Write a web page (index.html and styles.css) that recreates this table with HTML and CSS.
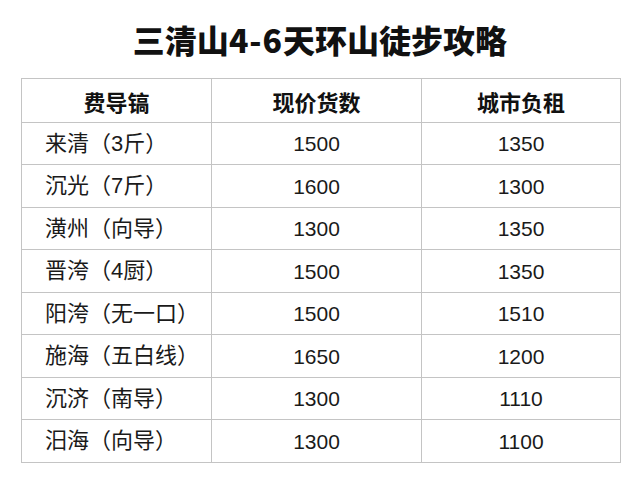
FILE: index.html
```html
<!DOCTYPE html>
<html lang="zh-CN">
<head>
<meta charset="utf-8">
<title>三清山4-6天环山徒步攻略</title>
<link rel="stylesheet" href="styles.css">
</head>
<body>
<div class="page">
  <h1 class="title">三清山<span class="num">4-6</span>天环山徒步攻略</h1>
  <table class="guide">
    <colgroup>
      <col class="c1"><col class="c2"><col class="c3">
    </colgroup>
    <thead>
      <tr><th>费导镐</th><th>现价货数</th><th>城市负租</th></tr>
    </thead>
    <tbody>
      <tr><td class="name">来清（3斤）</td><td>1500</td><td>1350</td></tr>
      <tr><td class="name">沉光（7斤）</td><td>1600</td><td>1300</td></tr>
      <tr><td class="name">潢州（向导）</td><td>1300</td><td>1350</td></tr>
      <tr><td class="name">晋洿（4厨）</td><td>1500</td><td>1350</td></tr>
      <tr><td class="name">阳洿（无一口）</td><td>1500</td><td>1510</td></tr>
      <tr><td class="name">施海（五白线）</td><td>1650</td><td>1200</td></tr>
      <tr><td class="name">沉济（南导）</td><td>1300</td><td>1110</td></tr>
      <tr><td class="name">汨海（向导）</td><td>1300</td><td>1100</td></tr>
    </tbody>
  </table>
</div>
</body>
</html>
```

FILE: styles.css
```css
html, body {
  margin: 0;
  padding: 0;
  background: #ffffff;
}

.page {
  width: 640px;
  height: 480px;
  font-family: "Liberation Sans", "Noto Sans CJK SC", sans-serif;
  color: #1a1a1a;
}

.title {
  margin: 0;
  height: 78px;
  display: flex;
  align-items: center;
  justify-content: center;
  font-family: "Noto Sans CJK SC", sans-serif;
  font-size: 32px;
  font-weight: 900;
  color: #111111;
  letter-spacing: 0;
  line-height: 1;
}

.title .num {
  letter-spacing: 1px;
}

.guide {
  margin-left: 21px;
  width: 599px;
  border-collapse: collapse;
  table-layout: fixed;
}

.c1 { width: 190px; }
.c2 { width: 210px; }
.c3 { width: 199px; }

.guide th,
.guide td {
  border: 1px solid #c4c4c4;
  padding: 0;
  text-align: center;
  vertical-align: middle;
  font-size: 21px;
  line-height: 1;
}

.guide th {
  height: 43px;
  font-family: "Noto Sans CJK SC", sans-serif;
  font-size: 22px;
  font-weight: 700;
  color: #111111;
}

.guide tbody tr td {
  height: 41px;
}

.guide tbody tr:nth-child(even) td {
  height: 42px;
}

.guide td.name {
  text-align: left;
  padding-left: 23px;
  font-size: 22px;
}
```
